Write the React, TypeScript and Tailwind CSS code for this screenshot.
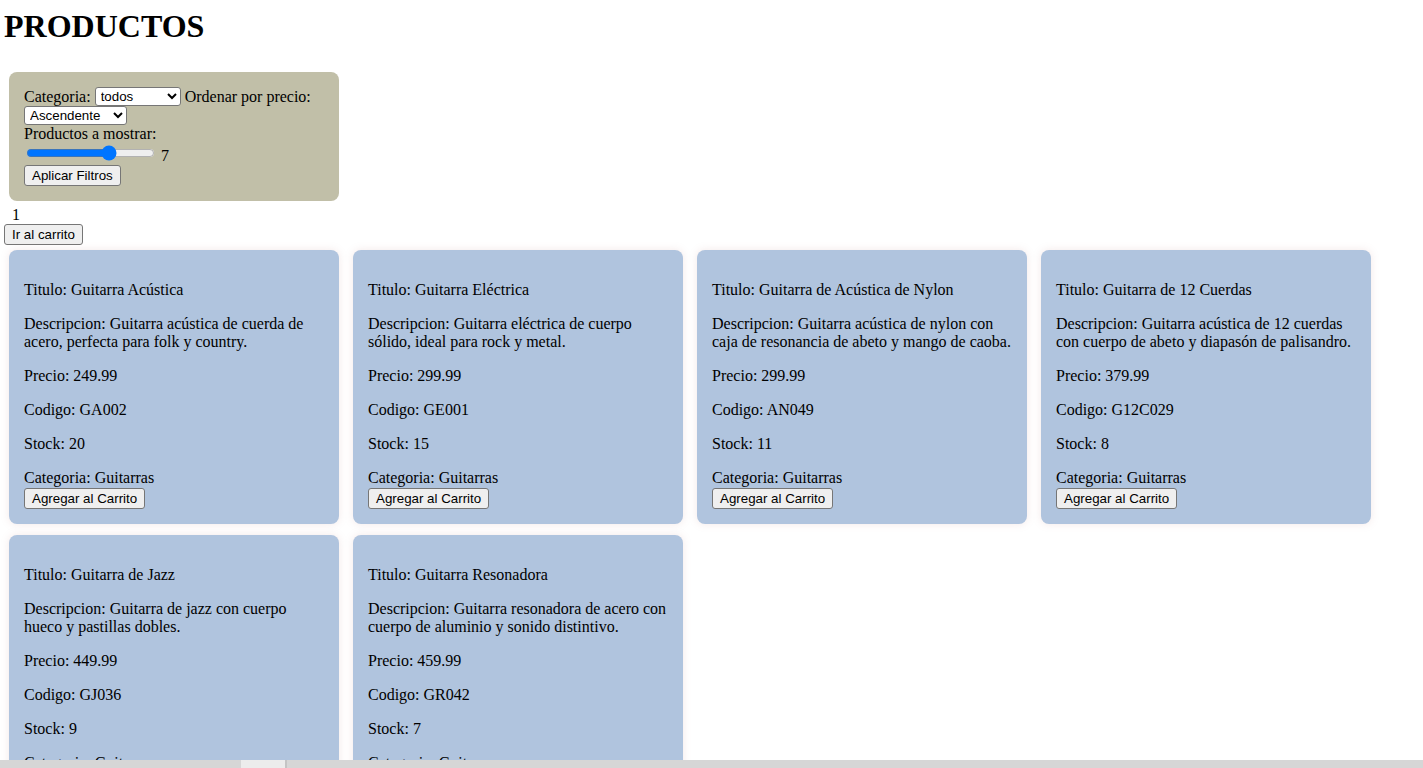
import { useState } from "react";

type Producto = {
  titulo: string;
  descripcion: string;
  precio: string;
  codigo: string;
  stock: number;
  categoria: string;
};

const PRODUCTOS: Producto[] = [
  {
    titulo: "Guitarra Acústica",
    descripcion: "Guitarra acústica de cuerda de acero, perfecta para folk y country.",
    precio: "249.99",
    codigo: "GA002",
    stock: 20,
    categoria: "Guitarras",
  },
  {
    titulo: "Guitarra Eléctrica",
    descripcion: "Guitarra eléctrica de cuerpo sólido, ideal para rock y metal.",
    precio: "299.99",
    codigo: "GE001",
    stock: 15,
    categoria: "Guitarras",
  },
  {
    titulo: "Guitarra de Acústica de Nylon",
    descripcion: "Guitarra acústica de nylon con caja de resonancia de abeto y mango de caoba.",
    precio: "299.99",
    codigo: "AN049",
    stock: 11,
    categoria: "Guitarras",
  },
  {
    titulo: "Guitarra de 12 Cuerdas",
    descripcion: "Guitarra acústica de 12 cuerdas con cuerpo de abeto y diapasón de palisandro.",
    precio: "379.99",
    codigo: "G12C029",
    stock: 8,
    categoria: "Guitarras",
  },
  {
    titulo: "Guitarra de Jazz",
    descripcion: "Guitarra de jazz con cuerpo hueco y pastillas dobles.",
    precio: "449.99",
    codigo: "GJ036",
    stock: 9,
    categoria: "Guitarras",
  },
  {
    titulo: "Guitarra Resonadora",
    descripcion: "Guitarra resonadora de acero con cuerpo de aluminio y sonido distintivo.",
    precio: "459.99",
    codigo: "GR042",
    stock: 7,
    categoria: "Guitarras",
  },
];

// controles "nativos" (preflight les quita borde y fondo)
const btn =
  "h-[21px] px-[7px] border border-[#767676] rounded-[3px] bg-[#efefef] text-[13.333px] leading-[15px] text-black font-['Liberation_Sans',Arial,sans-serif]";
const sel =
  "h-[19px] pl-[1px] border border-[#767676] rounded-[3px] bg-white text-[13.333px] text-black font-['Liberation_Sans',Arial,sans-serif]";

function Tarjeta({ p, onAdd }: { p: Producto; onAdd: () => void }) {
  return (
    <div className="w-[330px] rounded-lg bg-[#b0c4de] p-[15px] leading-[18px] shadow-[0_0_8px_rgba(190,130,130,0.18)]">
      <p className="mt-[16px]">Titulo: {p.titulo}</p>
      <p className="mt-[16px]">Descripcion: {p.descripcion}</p>
      <p className="mt-[16px]">Precio: {p.precio}</p>
      <p className="mt-[16px]">Codigo: {p.codigo}</p>
      <p className="mt-[16px]">Stock: {p.stock}</p>
      <div className="mt-[16px]">Categoria: {p.categoria}</div>
      <button className={`${btn} mt-[1px] block`} onClick={onAdd}>
        Agregar al Carrito
      </button>
    </div>
  );
}

export default function App() {
  const [cantidad, setCantidad] = useState(7);
  const [carrito, setCarrito] = useState(1);

  return (
    <div className="min-h-screen bg-white p-[4px] text-[16px] text-black font-['Liberation_Serif','Times_New_Roman',serif]">
      <h1 className="mt-[4px] mb-[27px] text-[32px] font-bold leading-[37px]">PRODUCTOS</h1>

      {/* Filtros */}
      <div className="ml-[5px] w-[330px] rounded-lg bg-[#c1bfa8] p-[15px] leading-[18px]">
        <div className="flex h-[19px] items-center">
          <span>Categoria:</span>
          <select className={`${sel} ml-[4px] w-[86px]`} defaultValue="todos">
            <option value="todos">todos</option>
            <option value="Guitarras">Guitarras</option>
            <option value="Accesorios">Accesorios</option>
          </select>
          <span className="ml-[4px]">Ordenar por precio:</span>
        </div>
        <div className="flex h-[19px] items-center">
          <select className={`${sel} w-[103px]`} defaultValue="asc">
            <option value="asc">Ascendente</option>
            <option value="desc">Descendente</option>
          </select>
        </div>
        <div className="h-[18px]">Productos a mostrar:</div>
        <div className="h-[22px]">
          <input
            type="range"
            min={1}
            max={10}
            value={cantidad}
            onChange={(e) => setCantidad(Number(e.target.value))}
            className="mx-[2px] mt-[2px] h-[16px] w-[129px] accent-[#0075ff]"
          />{" "}
          {cantidad}
        </div>
        <button className={`${btn} block`}>Aplicar Filtros</button>
      </div>

      <div className="mt-[5px] ml-[8px] h-[18px] leading-[18px]">{carrito}</div>
      <button className={`${btn} block`}>Ir al carrito</button>

      {/* Productos */}
      <div className="mt-[5px] ml-[5px] flex flex-wrap gap-x-[14px] gap-y-[11px]">
        {PRODUCTOS.map((p) => (
          <Tarjeta key={p.codigo} p={p} onAdd={() => setCarrito((c) => c + 1)} />
        ))}
      </div>

      {/* barra de desplazamiento horizontal */}
      <div className="fixed bottom-0 left-0 right-0 flex h-[8px] bg-[#d6d6d6]">
        <div className="ml-[241px] w-[44px] bg-[#ececec]" />
        <div className="w-[2px] bg-[#c4c4c4]" />
      </div>
    </div>
  );
}
